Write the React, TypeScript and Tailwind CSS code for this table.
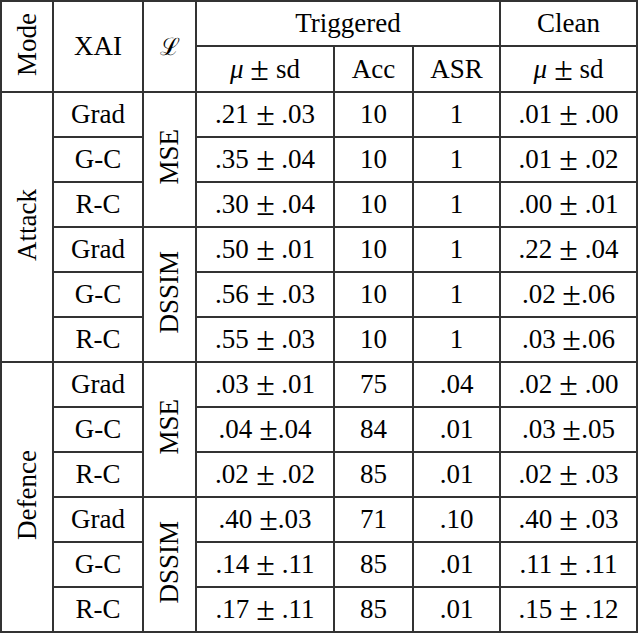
type Row = { xai: string; trig: string; acc: string; asr: string; clean: string };

const attackMse: Row[] = [
  { xai: "Grad", trig: ".21 ± .03", acc: "10", asr: "1", clean: ".01 ± .00" },
  { xai: "G-C", trig: ".35 ± .04", acc: "10", asr: "1", clean: ".01 ± .02" },
  { xai: "R-C", trig: ".30 ± .04", acc: "10", asr: "1", clean: ".00 ± .01" },
];
const attackDssim: Row[] = [
  { xai: "Grad", trig: ".50 ± .01", acc: "10", asr: "1", clean: ".22 ± .04" },
  { xai: "G-C", trig: ".56 ± .03", acc: "10", asr: "1", clean: ".02 ±.06" },
  { xai: "R-C", trig: ".55 ± .03", acc: "10", asr: "1", clean: ".03 ±.06" },
];
const defenceMse: Row[] = [
  { xai: "Grad", trig: ".03 ± .01", acc: "75", asr: ".04", clean: ".02 ± .00" },
  { xai: "G-C", trig: ".04 ±.04", acc: "84", asr: ".01", clean: ".03 ±.05" },
  { xai: "R-C", trig: ".02 ± .02", acc: "85", asr: ".01", clean: ".02 ± .03" },
];
const defenceDssim: Row[] = [
  { xai: "Grad", trig: ".40 ±.03", acc: "71", asr: ".10", clean: ".40 ± .03" },
  { xai: "G-C", trig: ".14 ± .11", acc: "85", asr: ".01", clean: ".11 ± .11" },
  { xai: "R-C", trig: ".17 ± .11", acc: "85", asr: ".01", clean: ".15 ± .12" },
];

const cell = "border-2 border-[#333] text-center align-middle p-0 leading-none font-normal font-[family-name:Liberation_Serif]";

function Vertical({ text }: { text: string }) {
  return <span className="inline-block [writing-mode:vertical-rl] rotate-180">{text}</span>;
}

// the ± in the original is TeX's, a bit wider than the Times one
function PlusMinus() {
  return <span className="inline-block scale-125 mx-[2px]">±</span>;
}

function Pm({ value }: { value: string }) {
  const [a, b] = value.split("±");
  return (
    <span className="whitespace-pre">
      {a}
      <PlusMinus />
      {b}
    </span>
  );
}

function MuSd() {
  return (
    <span className="whitespace-pre">
      <i>μ</i> <PlusMinus /> sd
    </span>
  );
}

function Group({ mode, loss, rows }: { mode?: string; loss: string; rows: Row[] }) {
  return (
    <>
      {rows.map((r, i) => (
        <tr key={r.xai + i} className="h-[45px]">
          {i === 0 && mode && (
            <td rowSpan={6} className={cell}>
              <Vertical text={mode} />
            </td>
          )}
          <td className={cell}>{r.xai}</td>
          {i === 0 && (
            <td rowSpan={3} className={cell}>
              <Vertical text={loss} />
            </td>
          )}
          <td className={cell}><Pm value={r.trig} /></td>
          <td className={cell}>{r.acc}</td>
          <td className={cell}>{r.asr}</td>
          <td className={cell}><Pm value={r.clean} /></td>
        </tr>
      ))}
    </>
  );
}

export default function App() {
  return (
    <div className="bg-white w-[640px] h-[634px] text-black text-[27px]">
      <table className="border-collapse table-fixed w-[638px]">
        <colgroup>
          <col className="w-[52px]" />
          <col className="w-[90px]" />
          <col className="w-[53px]" />
          <col className="w-[138px]" />
          <col className="w-[79px]" />
          <col className="w-[87px]" />
          <col className="w-[137px]" />
        </colgroup>
        <thead>
          <tr className="h-[45px]">
            <th rowSpan={2} className={cell}>
              <Vertical text="Mode" />
            </th>
            <th rowSpan={2} className={cell}>XAI</th>
            <th rowSpan={2} className={cell + " text-[24px]"}>ℒ</th>
            <th colSpan={3} className={cell}>Triggered</th>
            <th className={cell}>Clean</th>
          </tr>
          <tr className="h-[46px]">
            <th className={cell}><MuSd /></th>
            <th className={cell}>Acc</th>
            <th className={cell}>ASR</th>
            <th className={cell}><MuSd /></th>
          </tr>
        </thead>
        <tbody>
          <Group mode="Attack" loss="MSE" rows={attackMse} />
          <Group loss="DSSIM" rows={attackDssim} />
          <Group mode="Defence" loss="MSE" rows={defenceMse} />
          <Group loss="DSSIM" rows={defenceDssim} />
        </tbody>
      </table>
    </div>
  );
}
